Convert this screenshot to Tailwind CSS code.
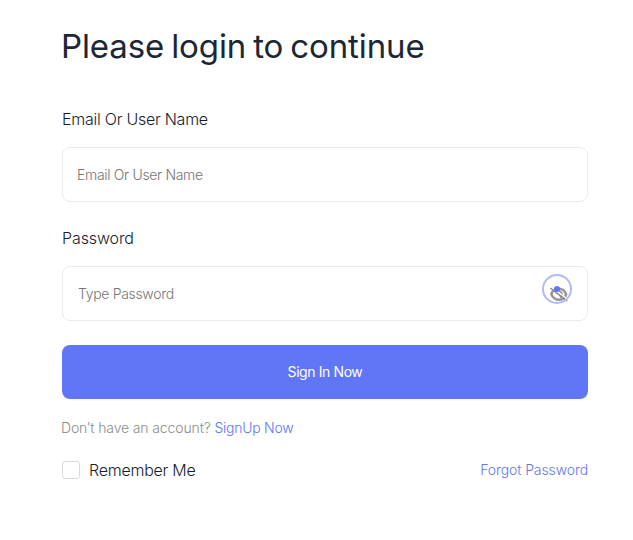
<!DOCTYPE html>
<html lang="en">
<head>
    <meta charset="UTF-8">
    <meta name="viewport" content="width=device-width, initial-scale=1.0">
    <title>Login</title>
    <script src="https://cdn.jsdelivr.net/npm/@tailwindcss/browser@4"></script>
</head>
<body class="bg-white font-['Inter','Liberation_Sans',sans-serif]">
    <div class="w-[526px] ml-[62px] pt-[26px]">
        <h1 class="-ml-px text-[33px] leading-10 text-[#1d2635] whitespace-nowrap tracking-[-0.1px] [word-spacing:-2.2px]">Please login to continue</h1>

        <form>
            <!-- Email -->
            <div class="mt-[41px]">
                <label for="email" class="block text-base leading-6 font-[350] text-[#161c2d] tracking-[-0.25px]">Email Or User Name</label>
                <input id="email" type="text" placeholder="Email Or User Name" class="block mt-4 h-[55px] w-full rounded-lg border border-[#ebebeb] px-[14px] text-sm font-light tracking-[-0.32px] placeholder:text-[#757575]">
            </div>

            <!-- Password -->
            <div class="mt-6">
                <label for="password" class="block text-base leading-6 font-[350] text-[#161c2d] tracking-[-0.1px]">Password</label>
                <div class="relative mt-4">
                    <input id="password" type="password" placeholder="Type Password" class="block h-[55px] w-full rounded-lg border border-[#ebebeb] px-[15px] text-sm font-light tracking-[-0.32px] placeholder:text-[#757575]">
                    <svg class="absolute right-4 top-2" width="30" height="34" viewBox="0 0 30 34" fill="none">
                        <path d="M9.2 20C11 16 14 14.8 17 14.8S22.6 16 24.2 20.5C22.6 24.5 20 25.8 17 25.8S11 24.5 9.2 20Z" stroke="#969696" stroke-width="2.4"/>
                        <path d="M17 17.2A3.3 3.3 0 0 1 18 23.4" stroke="#969696" stroke-width="2"/>
                        <path d="M9.8 13L26.3 26" stroke="#fff" stroke-width="1.2"/>
                        <path d="M8.4 14L25.2 27.2" stroke="#8b8b8b" stroke-width="1.5"/>
                        <circle cx="15" cy="15" r="14" stroke="#b0bafa" stroke-width="2"/>
                        <circle cx="15" cy="15" r="3" fill="#6176f6"/>
                    </svg>
                </div>
            </div>

            <button type="button" class="block mt-6 h-[54px] w-full rounded-lg bg-[#6176f6] text-sm font-normal text-white tracking-[-0.4px]">Sign In Now</button>

            <p class="mt-[18px] -ml-px text-sm leading-[22px] font-light text-[#8b8b8b] whitespace-nowrap tracking-[-0.13px]">Don’t have an account? <a href="#" class="text-[#6176f6] tracking-[-0.25px]">SignUp Now</a></p>

            <div class="mt-[19px] flex items-center justify-between">
                <label class="flex items-center gap-[9px] text-base leading-6 font-light text-[#161c2d] tracking-[-0.25px]">
                    <input type="checkbox" class="size-[18px] appearance-none rounded-[3px] border border-[#d9d9d9]">
                    <span>Remember Me</span>
                </label>
                <a href="#" class="text-sm font-light text-[#6176f6] tracking-[-0.1px]">Forgot Password</a>
            </div>
        </form>
    </div>
</body>
</html>
